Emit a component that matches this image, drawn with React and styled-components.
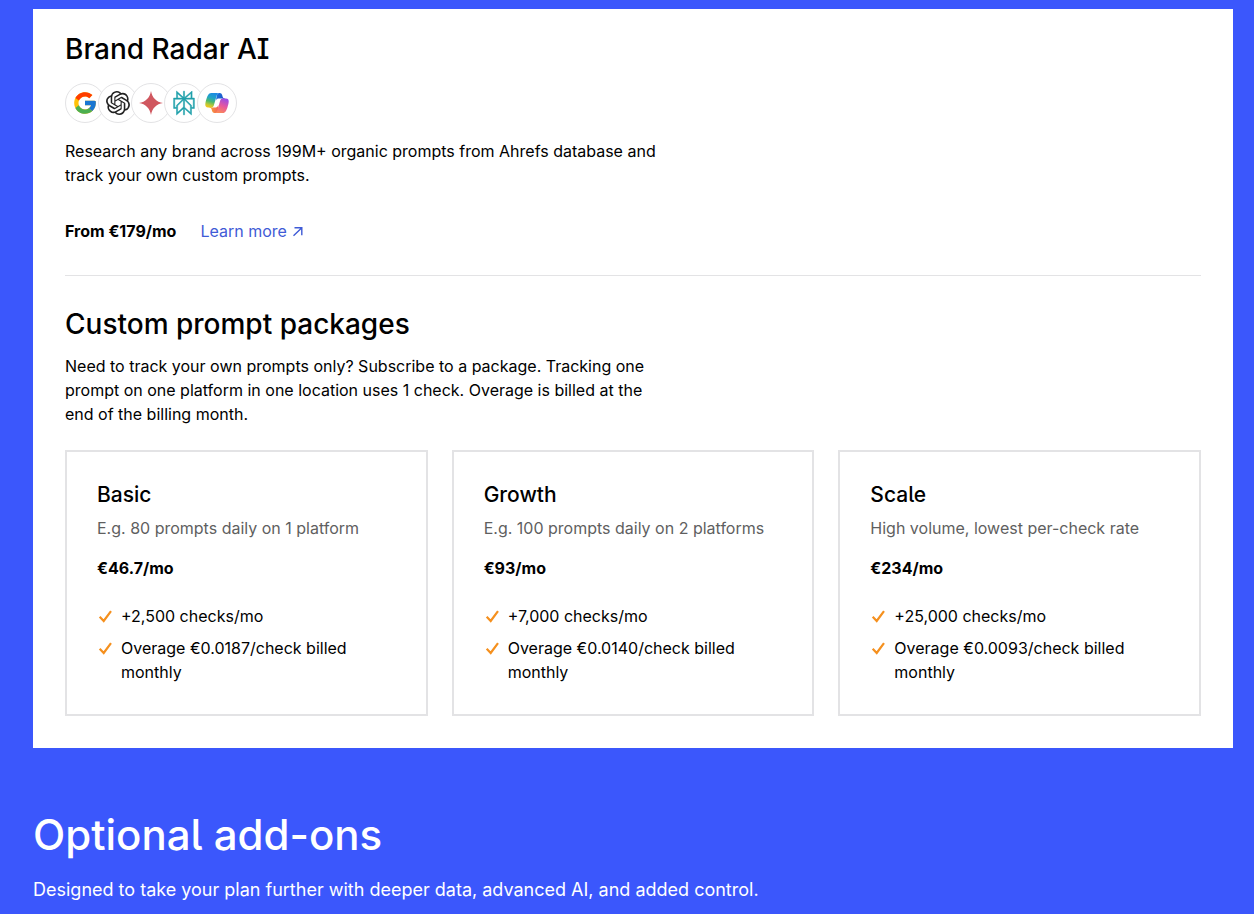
import React from "react";
import styled, { createGlobalStyle } from "styled-components";
import { FcGoogle } from "react-icons/fc";
import { SiOpenai, SiPerplexity } from "react-icons/si";

const GlobalStyle = createGlobalStyle`
  * { box-sizing: border-box; }
  body {
    margin: 0;
    background: #3b57fc;
    color: #000;
    font: 400 16px/24px Inter, "Liberation Sans", sans-serif;
  }
  h2, h3, p, ul { margin: 0; }
`;

const Page = styled.main`
  max-width: 1254px;
  margin: 0 auto;
  padding: 9px 21px 10px 33px;
`;

const Panel = styled.section`
  background: #fff;
  padding: 22px 32px 32px;
`;

const Heading = styled.h2`
  font-size: ${(p) => (p.$large ? 42 : 28)}px;
  line-height: ${(p) => (p.$large ? 52 : 36)}px;
  font-weight: 500;
  font-optical-sizing: none;
  font-feature-settings: "cv05", "cv08";
`;

const Platforms = styled.ul`
  display: flex;
  list-style: none;
  padding: 0;
  margin: 16px 0;
`;

const Platform = styled.li`
  display: grid;
  place-items: center;
  width: 40px;
  height: 40px;
  border: 1px solid #e3e3e5;
  border-radius: 50%;
  background: #fff;
  & + & { margin-left: -7px; }
`;

const Copy = styled.p`
  max-width: 600px;
`;

const Offer = styled.div`
  display: flex;
  gap: 24px;
  margin-top: 32px;
  padding-bottom: 32px;
  border-bottom: 1px solid #e3e3e5;
`;

const Price = styled.strong`
  font-weight: 700;
`;

const LearnMore = styled.a`
  display: inline-flex;
  align-items: center;
  gap: 5px;
  color: #3f5bd6;
  text-decoration: none;
`;

const Packages = styled.section`
  display: grid;
  gap: 12px;
  padding-top: 30px;
`;

const Cards = styled.div`
  display: grid;
  grid-template-columns: repeat(auto-fit, minmax(280px, 1fr));
  gap: 24px;
  padding-top: 12px;
`;

const Card = styled.article`
  border: 2px solid #e3e3e5;
  padding: 30px;
`;

const CardTitle = styled.h3`
  font-size: 21px;
  line-height: 26px;
  font-weight: 500;
  font-optical-sizing: none;
  font-feature-settings: "cv05", "cv08";
`;

const CardNote = styled.p`
  margin: 8px 0 16px;
  color: #5f5f5f;
`;

const Features = styled.ul`
  display: grid;
  gap: 8px;
  margin-top: 24px;
  padding: 0;
  list-style: none;
`;

const Feature = styled.li`
  display: flex;
  gap: 8px;
  svg { flex: none; margin-top: 4px; }
`;

const AddOns = styled.section`
  margin-top: 61px;
  color: #fff;
`;

const Lead = styled.p`
  margin-top: 15px;
  font-size: 18px;
  line-height: 28px;
`;

const Check = () => (
  <svg width="16" height="16" viewBox="0 0 16 16" fill="none" aria-hidden="true">
    <path d="M2.7 8.800l4 4.200L14 3.200" stroke="#f5901e" strokeWidth="2.200" />
  </svg>
);

const Arrow = () => (
  <svg width="12" height="12" viewBox="0 0 12 12" fill="none" stroke="currentColor" strokeWidth="1.4" aria-hidden="true">
    <path d="M2.500 2.700h7.300v7.500M9.600 2.900L1.500 10.700" />
  </svg>
);

const Gemini = () => (
  <svg width="24" height="24" viewBox="0 0 24 24" role="img" aria-label="Gemini">
    <path fill="#d0575f" d="M12 0C13 6.600 17.400 11 24 12C17.400 13 13 17.400 12 24C11 17.400 6.600 13 0 12C6.600 11 11 6.600 12 0Z" />
  </svg>
);

const Copilot = () => (
  <svg width="24" height="24" viewBox="0 0 48 48" role="img" aria-label="Copilot">
    <defs>
      <linearGradient id="cpTop" x1="0" y1="0" x2="1" y2="0.5">
        <stop offset="0" stopColor="#1b7be0" />
        <stop offset="1" stopColor="#1d4fc4" />
      </linearGradient>
      <linearGradient id="cpLeft" x1="0.6" y1="0" x2="0.3" y2="1">
        <stop offset="0" stopColor="#1a8ae4" />
        <stop offset="0.35" stopColor="#22a5c4" />
        <stop offset="0.6" stopColor="#4cb96e" />
        <stop offset="0.85" stopColor="#c3c932" />
        <stop offset="1" stopColor="#f2c51c" />
      </linearGradient>
      <linearGradient id="cpRight" x1="0.7" y1="0" x2="0.3" y2="1">
        <stop offset="0" stopColor="#9a4be6" />
        <stop offset="0.5" stopColor="#e8589c" />
        <stop offset="1" stopColor="#fb8a56" />
      </linearGradient>
      <linearGradient id="cpBottom" x1="0" y1="0" x2="1" y2="0">
        <stop offset="0" stopColor="#f6b02b" />
        <stop offset="1" stopColor="#f4605f" />
      </linearGradient>
    </defs>
    <path fill="url(#cpTop)" d="M34.142 7.325A4.630 4.630 0 0 0 29.700 4h-1.350a4.630 4.630 0 0 0-4.554 3.794L21.480 20.407l.575-1.965a4.630 4.630 0 0 1 4.444-3.330h7.853l3.294 1.282 3.175-1.283h-.926a4.630 4.630 0 0 1-4.443-3.325z" />
    <path fill="url(#cpBottom)" d="M14.330 40.656A4.630 4.630 0 0 0 18.779 44h2.870a4.630 4.630 0 0 0 4.629-4.510l.312-12.163-.654 2.233a4.630 4.630 0 0 1-4.443 3.329h-7.919l-2.823-1.531-3.056 1.531h.911c2.060 0 3.870 1.359 4.450 3.344z" />
    <path fill="url(#cpLeft)" d="M28.100 4H12.050c-4.585 0-7.336 6.060-9.170 12.120C.706 23.300-2.138 32.900 6.088 32.900h6.929a4.630 4.630 0 0 0 4.450-3.357 2078 2078 0 0 1 4.971-17.156c.843-2.843 1.544-5.284 2.621-6.805C25.663 4.730 26.670 4 28.100 4" />
    <path fill="url(#cpRight)" d="M19.899 44h16.047c4.585 0 7.336-6.061 9.170-12.123 2.173-7.180 5.017-16.780-3.208-16.780h-6.930a4.630 4.630 0 0 0-4.450 3.357 2084 2084 0 0 1-4.972 17.160c-.842 2.843-1.544 5.284-2.620 6.805-.604.852-1.610 1.581-3.037 1.581" />
  </svg>
);

const packages = [
  { name: "Basic", note: "E.g. 80 prompts daily on 1 platform", price: "€46.7/mo", checks: "+2,500 checks/mo", overage: "Overage €0.0187/check billed monthly" },
  { name: "Growth", note: "E.g. 100 prompts daily on 2 platforms", price: "€93/mo", checks: "+7,000 checks/mo", overage: "Overage €0.0140/check billed monthly" },
  { name: "Scale", note: "High volume, lowest per-check rate", price: "€234/mo", checks: "+25,000 checks/mo", overage: "Overage €0.0093/check billed monthly" },
];

export default function App() {
  return (
    <>
      <GlobalStyle />
      <Page>
        <Panel>
          <Heading>Brand Radar AI</Heading>
          <Platforms>
            <Platform><FcGoogle size={26} aria-label="Google" /></Platform>
            <Platform><SiOpenai size={24} color="#222" aria-label="OpenAI" /></Platform>
            <Platform><Gemini /></Platform>
            <Platform><SiPerplexity size={24} color="#20a0ab" stroke="#20a0ab" strokeWidth="0.5" overflow="visible" aria-label="Perplexity" /></Platform>
            <Platform><Copilot /></Platform>
          </Platforms>
          <Copy>
            Research any brand across 199M+ organic prompts from Ahrefs database and track your own custom prompts.
          </Copy>
          <Offer>
            <Price>From €179/mo</Price>
            <LearnMore href="#brand-radar">Learn more <Arrow /></LearnMore>
          </Offer>
          <Packages>
            <Heading>Custom prompt packages</Heading>
            <Copy>
              Need to track your own prompts only? Subscribe to a package. Tracking one prompt on one platform in one
              location uses 1 check. Overage is billed at the end of the billing month.
            </Copy>
            <Cards>
              {packages.map((item) => (
                <Card key={item.name}>
                  <CardTitle>{item.name}</CardTitle>
                  <CardNote>{item.note}</CardNote>
                  <Price>{item.price}</Price>
                  <Features>
                    <Feature><Check /><span>{item.checks}</span></Feature>
                    <Feature><Check /><span>{item.overage}</span></Feature>
                  </Features>
                </Card>
              ))}
            </Cards>
          </Packages>
        </Panel>
        <AddOns>
          <Heading $large>Optional add-ons</Heading>
          <Lead>Designed to take your plan further with deeper data, advanced AI, and added control.</Lead>
        </AddOns>
      </Page>
    </>
  );
}
